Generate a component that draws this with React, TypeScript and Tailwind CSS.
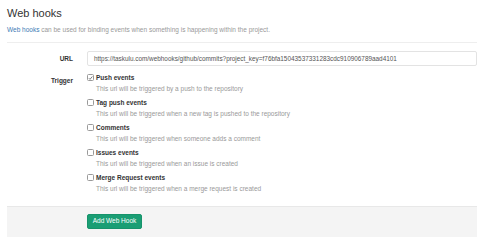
import React from "react";

const items = [
  { label: "Push events", desc: "This url will be triggered by a push to the repository", checked: true },
  { label: "Tag push events", desc: "This url will be triggered when a new tag is pushed to the repository", checked: false },
  { label: "Comments", desc: "This url will be triggered when someone adds a comment", checked: false },
  { label: "Issues events", desc: "This url will be triggered when an issue is created", checked: false },
  { label: "Merge Request events", desc: "This url will be triggered when a merge request is created", checked: false },
];

function Box({ checked }: { checked: boolean }) {
  return (
    <div className="w-[7px] h-[7px] rounded-[1.5px] border border-[#9a9a9a] bg-white flex items-center justify-center shrink-0">
      {checked && (
        <svg width="6" height="6" viewBox="0 0 6 6">
          <path d="M1 3.2 L2.4 4.6 L5.2 1.2" fill="none" stroke="#666" strokeWidth="1" />
        </svg>
      )}
    </div>
  );
}

export default function App() {
  return (
    <div
      className="w-[480px] h-[247px] bg-white pl-[7px] pr-[3px] overflow-hidden"
      style={{ fontFamily: '"Liberation Sans", Arial, sans-serif' }}
    >
      <div className="pt-[7px] text-[11px] leading-[13px] text-[#333]">Web hooks</div>
      <div className="mt-[5px] text-[6.5px] leading-[9px] text-[#999]">
        <span className="text-[#3d7bb5]">Web hooks</span> can be used for binding events when something is happening within the project.
      </div>
      <div className="mt-[8px] border-t border-[#eeeeee]" />
      <div className="mt-[8px] flex items-center">
        <div className="w-[66px] text-right text-[6.5px] font-bold text-[#333]">URL</div>
        <div className="ml-[14px] flex-1 h-[15px] border border-[#e3e3e3] rounded-[2px] flex items-center pl-[6px] text-[6.4px] text-[#555]">
          https://taskulu.com/webhooks/github/commits?project_key=f76bfa15043537331283cdc910906789aad4101
        </div>
      </div>
      <div className="mt-[7px] flex">
        <div className="w-[66px] text-right text-[6.5px] leading-[9px] font-bold text-[#333] pt-[3px]">Trigger</div>
        <div className="ml-[14px] flex flex-col gap-[4px]">
          {items.map((it) => (
            <div key={it.label}>
              <div className="flex items-center h-[9px]">
                <Box checked={it.checked} />
                <span className="ml-[2px] text-[6.5px] font-bold text-[#333] leading-[9px]">{it.label}</span>
              </div>
              <div className="mt-[2px] pl-[9px] text-[6.5px] leading-[10px] text-[#999]">{it.desc}</div>
            </div>
          ))}
        </div>
      </div>
      <div className="mt-[12px] h-[31px] bg-[#f4f4f4] border-t border-[#e8e8e8] pl-[80px] pt-[7px] flex items-start">
        <button className="h-[15px] w-[55px] rounded-[2px] bg-[#1a9e74] border border-[#17936b] text-white text-[6.5px] leading-none flex items-center justify-center">
          Add Web Hook
        </button>
      </div>
    </div>
  );
}
